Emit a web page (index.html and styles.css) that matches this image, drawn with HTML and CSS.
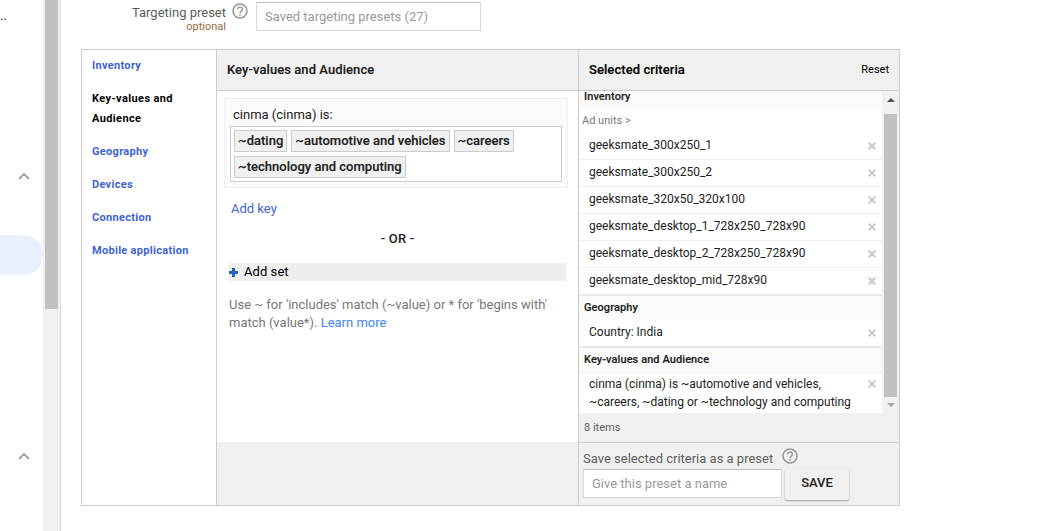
FILE: index.html
```html
<!DOCTYPE html>
<html lang="en">
<head>
<meta charset="utf-8">
<title>Targeting</title>
<link rel="stylesheet" href="styles.css">
</head>
<body>
<div class="app">
  <aside class="sidebar">
    <div class="side-title">..</div>
    <svg class="chevron" viewBox="0 0 12 8"><path d="M1 7 L6 2 L11 7"/></svg>
    <div class="side-active"></div>
    <svg class="chevron chevron-low" viewBox="0 0 12 8"><path d="M1 7 L6 2 L11 7"/></svg>
  </aside>
  <div class="page-scroll"><div class="page-thumb"></div></div>
  <main class="main">
    <div class="preset-row">
      <div class="preset-label"><span class="preset-name">Targeting preset</span><span class="optional">optional</span></div>
      <svg class="help" viewBox="0 0 16 16"><circle cx="8" cy="8" r="7"/><path d="M5.700 6.400a2.300 2.300 0 1 1 3.700 1.700C8.500 8.800 8 9.100 8 10.200"/><path d="M8 11.200v1.500"/></svg>
      <div class="input preset-input">Saved targeting presets (27)</div>
    </div>
    <section class="panel">
      <nav class="tabs">
        <a class="tab">Inventory</a>
        <a class="tab current">Key-values and Audience</a>
        <a class="tab">Geography</a>
        <a class="tab">Devices</a>
        <a class="tab">Connection</a>
        <a class="tab">Mobile application</a>
      </nav>
      <div class="editor">
        <header class="head"><span class="head-title">Key-values and Audience</span></header>
        <div class="editor-body">
          <div class="key-card">
            <div class="key-name">cinma (cinma) is:</div>
            <div class="chips">
              <span class="chip">~dating</span><span class="chip">~automotive and vehicles</span><span class="chip">~careers</span><span class="chip">~technology and computing</span>
            </div>
          </div>
          <a class="add-key">Add key</a>
          <div class="or">- OR -</div>
          <div class="add-set"><svg class="plus" viewBox="0 0 9 9"><path d="M3 0h3v3h3v3H6v3H3V6H0V3h3z"/></svg><span>Add set</span></div>
          <p class="hint">Use ~ for 'includes' match (~value) or * for 'begins with'<br>match (value*). <a class="learn">Learn more</a></p>
        </div>
      </div>
      <div class="criteria">
        <header class="head"><span class="head-title dark">Selected criteria</span><a class="reset">Reset</a></header>
        <div class="list-wrap">
          <div class="list">
            <div class="group first">Inventory</div>
            <div class="path">Ad units &gt;</div>
            <div class="item"><span>geeksmate_300x250_1</span><svg class="x" viewBox="0 0 8 8"><path d="M.7 .7 7.300 7.300M7.300 .7 .7 7.300"/></svg></div>
            <div class="item"><span>geeksmate_300x250_2</span><svg class="x" viewBox="0 0 8 8"><path d="M.7 .7 7.300 7.300M7.300 .7 .7 7.300"/></svg></div>
            <div class="item"><span>geeksmate_320x50_320x100</span><svg class="x" viewBox="0 0 8 8"><path d="M.7 .7 7.300 7.300M7.300 .7 .7 7.300"/></svg></div>
            <div class="item"><span>geeksmate_desktop_1_728x250_728x90</span><svg class="x" viewBox="0 0 8 8"><path d="M.7 .7 7.300 7.300M7.300 .7 .7 7.300"/></svg></div>
            <div class="item"><span>geeksmate_desktop_2_728x250_728x90</span><svg class="x" viewBox="0 0 8 8"><path d="M.7 .7 7.300 7.300M7.300 .7 .7 7.300"/></svg></div>
            <div class="item last"><span>geeksmate_desktop_mid_728x90</span><svg class="x" viewBox="0 0 8 8"><path d="M.7 .7 7.300 7.300M7.300 .7 .7 7.300"/></svg></div>
            <div class="group">Geography</div>
            <div class="item last"><span>Country: India</span><svg class="x" viewBox="0 0 8 8"><path d="M.7 .7 7.300 7.300M7.300 .7 .7 7.300"/></svg></div>
            <div class="group ruled">Key-values and Audience</div>
            <div class="item multi"><span>cinma (cinma) is ~automotive and vehicles,<br>~careers, ~dating or ~technology and computing</span><svg class="x" viewBox="0 0 8 8"><path d="M.7 .7 7.300 7.300M7.300 .7 .7 7.300"/></svg></div>
          </div>
          <div class="list-scroll"><i class="arrow up"></i><div class="list-thumb"></div><i class="arrow down"></i></div>
        </div>
        <div class="count">8 items</div>
        <div class="save">
          <div class="save-label"><span>Save selected criteria as a preset</span><svg class="help" viewBox="0 0 16 16"><circle cx="8" cy="8" r="7"/><path d="M5.700 6.400a2.300 2.300 0 1 1 3.700 1.700C8.500 8.800 8 9.100 8 10.200"/><path d="M8 11.200v1.500"/></svg></div>
          <div class="save-row"><div class="input name-input">Give this preset a name</div><button class="button">SAVE</button></div>
        </div>
      </div>
    </section>
  </main>
</div>
</body>
</html>
```
FILE: styles.css
```css
* { box-sizing: border-box; }
body { margin: 0; background: #fff; font: 13px/18px Roboto, sans-serif; color: #212121; overflow: hidden; }
.app { display: flex; height: 531px; }
.sidebar { width: 43px; display: flex; flex-direction: column; }
.side-title { height: 168px; padding-top: 7px; line-height: 18px; }
.chevron { width: 12px; height: 8px; margin: 3.5px 0 0 18px; fill: none; stroke: #9a9a9a; stroke-width: 1.8; flex: none; }
.side-active { height: 40px; margin-top: 55.5px; background: #e8f0fe; border-radius: 0 20px 20px 0; }
.chevron-low { margin-top: 176.5px; }
.page-scroll { width: 18px; background: #f0f0f0; border-right: 1px solid #dadada; padding-left: 2px; }
.page-thumb { width: 13px; height: 309px; background: #c1c1c1; }
.main { width: 976px; padding-left: 20px; }
.preset-row { display: flex; height: 49px; align-items: flex-start; }
.preset-label { width: 145px; padding-top: 4px; display: flex; flex-direction: column; align-items: flex-end; color: #5c5c5c; }
.optional { font-size: 11px; line-height: 14px; margin-top: -2px; color: #966a3c; }
.help { width: 16px; height: 16px; fill: none; stroke: #979797; stroke-width: 1.5; flex: none; }
.preset-row .help { margin: 3px 8px 0 6px; }
.input { border: 1px solid #d9d9d9; border-top-color: #c0c0c0; background: #fff; height: 29px; line-height: 27px; padding-left: 8px; color: #999; white-space: nowrap; }
.preset-input { width: 225px; margin-top: 2px; }
.panel { width: 819px; height: 457px; border: 1px solid #ccc; display: flex; }
.tabs { width: 135px; border-right: 1px solid #ccc; padding: 6px 20px 0 10px; display: flex; flex-direction: column; gap: 13px; }
.tab { font-size: 11px; font-weight: 700; line-height: 20px; color: #3b64d2; letter-spacing: .3px; white-space: nowrap; }
.tab.current { color: #000; white-space: normal; letter-spacing: .38px; }
.editor { width: 361px; background: #f0f0f0; }
.head { height: 41px; background: #f0f0f0; border-bottom: 1px solid #ccc; display: flex; justify-content: space-between; align-items: center; padding: 0 10px; }
.head-title { font-weight: 500; letter-spacing: .07px; -webkit-text-stroke: .15px; }
.head-title.dark { color: #000; }
.editor-body { height: 351px; background: #fff; padding: 7px 10px 0 7px; }
.key-card { height: 90px; border: 1px solid #eee; background: #fafafa; padding: 7px 5px 0; }
.key-name { padding-left: 3px; height: 20px; }
.chips { height: 56px; border: 1px solid #ccc; background: #fff; padding: 3px; display: flex; flex-wrap: wrap; gap: 4px; align-content: flex-start; }
.chip { height: 22px; line-height: 20px; padding: 0 3px; background: #f0f0f0; border: 1px solid #ccc; font-weight: 500; letter-spacing: .02px; white-space: nowrap; -webkit-text-stroke: .15px; }
.add-key { display: block; margin: 12px 0 0 7px; color: #3b64d2; }
.or { text-align: center; font-weight: 500; margin: 12px 0 0 3px; letter-spacing: .2px; }
.add-set { margin: 15px 2px 0 5px; height: 18px; background: #eee; display: flex; align-items: center; gap: 6px; color: #000; letter-spacing: .06px; }
.plus { width: 9px; height: 9px; fill: #2466b4; }
.hint { margin: 15px 0 0 5px; color: #777; white-space: nowrap; }
.learn { color: #4285f4; }
.criteria { width: 321px; border-left: 1px solid #ccc; background: #f0f0f0; }
.reset { font-size: 11px; color: #000; }
.list-wrap { display: flex; height: 322px; }
.list { width: 303px; background: #fff; }
.group { height: 24px; background: #fafafa; font-size: 11px; font-weight: 500; line-height: 23px; padding-left: 5px; letter-spacing: .08px; -webkit-text-stroke: .15px; }
.group.first { height: 18px; line-height: 12px; }
.group.ruled { height: 25px; border-bottom: 1px solid #eee; }
.path { height: 24px; line-height: 23px; font-size: 11px; padding-left: 3px; color: #777; }
.item { height: 27px; border-bottom: 1px solid #eee; padding: 3px 6px 0 10px; display: flex; justify-content: space-between; font-size: 12px; line-height: 18px; white-space: nowrap; }
.item.last { height: 28px; border-bottom: 2px solid #e9e9e9; }
.item.multi { height: 40px; border: 0; padding-top: 2px; }
.x { width: 8px; height: 8px; margin-top: 6px; stroke: #c8c8c8; stroke-width: 2; flex: none; }
.multi .x { margin-top: 5px; }
.list-scroll { width: 17px; background: #f1f1f1; display: flex; flex-direction: column; align-items: center; padding: 7px 0 0; }
.arrow { border: 4px solid transparent; border-top: 0; border-bottom: 4px solid #505050; }
.arrow.down { border-top: 4px solid #a3a3a3; border-bottom: 0; margin-top: 6px; }
.list-thumb { width: 13px; height: 283px; margin-top: 12px; background: #c1c1c1; flex: none; }
.count { height: 30px; line-height: 29px; font-size: 11px; color: #616161; padding-left: 5px; border-bottom: 1px solid #ccc; }
.save { padding: 5px 4px 0; }
.save-label { display: flex; height: 21px; color: #616161; gap: 9px; line-height: 21px; }
.save-row { display: flex; gap: 3px; }
.name-input { width: 199px; }
.button { width: 64px; height: 31px; border: 0; border-radius: 2px; background: #f0f0f0; box-shadow: 0 1px 2px rgba(0,0,0,.35); font: 500 13px/28px Roboto, sans-serif; color: #212121; padding: 0 0 3px; }
```
